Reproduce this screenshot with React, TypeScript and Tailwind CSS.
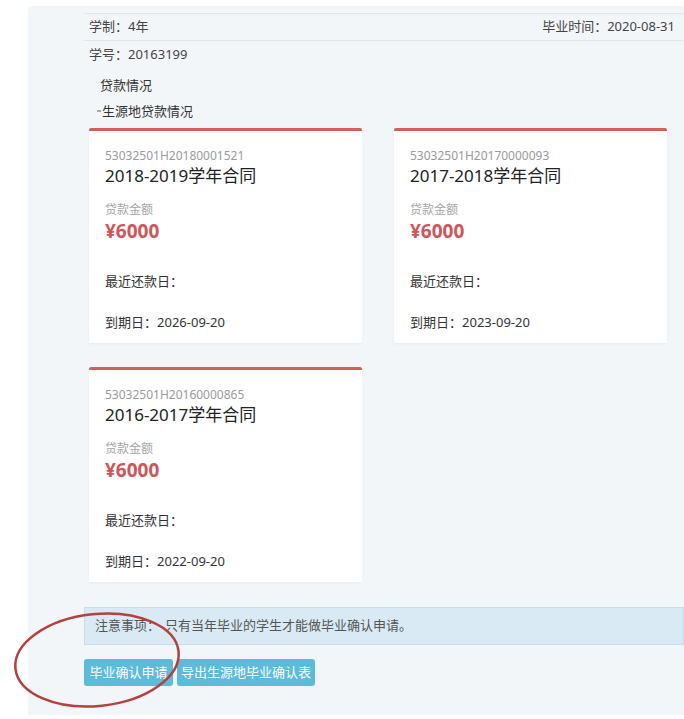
import React from 'react';

interface Contract {
  no: string;
  title: string;
  amount: string;
  due: string;
}

const contracts: Contract[] = [
  { no: '53032501H20180001521', title: '2018-2019学年合同', amount: '¥6000', due: '2026-09-20' },
  { no: '53032501H20170000093', title: '2017-2018学年合同', amount: '¥6000', due: '2023-09-20' },
  { no: '53032501H20160000865', title: '2016-2017学年合同', amount: '¥6000', due: '2022-09-20' },
];

const font = { fontFamily: '"Noto Sans", "Noto Sans CJK SC", sans-serif' };

// 合同卡片
const ContractCard: React.FC<{ c: Contract }> = ({ c }) => (
  <div className="h-[215px] bg-white border-t-[3px] border-[#d4605a] rounded-t-[2px] shadow-[0_1px_3px_rgba(0,0,0,0.04)] pl-4 pt-[17px]">
    <div className="text-[12px] leading-[16px] text-[#9a9a9a]">{c.no}</div>
    <div className="text-[17px] leading-[24px] text-[#222]">{c.title}</div>
    <div className="mt-[14px] text-[12px] leading-[16px] text-[#a5a5a5]">贷款金额</div>
    <div className="text-[19px] leading-[26px] font-bold text-[#d0555a]">{c.amount}</div>
    <div className="mt-[28px] text-[13px] leading-[18px] text-[#333]">最近还款日：</div>
    <div className="mt-[23px] text-[13px] leading-[18px] text-[#333]">到期日：{c.due}</div>
  </div>
);

const App: React.FC = () => {
  return (
    <div className="relative w-[684px] h-[719px] bg-white overflow-hidden" style={font}>
      <div className="ml-[28px] mt-[6px] h-[709px] bg-[#f3f6f9] pl-[56px]">
        {/* 基本信息 */}
        <div className="pt-[7px]">
          <div className="flex justify-between items-center h-[28px] border-t border-b border-[#e1e6ea] pl-[5px] pr-[9px] text-[13px] text-[#444]">
            <span>学制：4年</span>
            <span>毕业时间：2020-08-31</span>
          </div>
          <div className="flex items-center h-[27px] pl-[5px] text-[13px] text-[#444]">学号：20163199</div>
        </div>

        {/* 贷款情况 */}
        <div className="mt-[8px] pl-[16px] text-[13px] leading-[18px] text-[#333]">贷款情况</div>
        <div className="mt-[8px] pl-[13px] flex items-center text-[13px] leading-[18px] text-[#333]">
          <span className="inline-block w-[4px] h-[2px] bg-[#9cb59c] mr-[1px]" />
          生源地贷款情况
        </div>

        <div className="mt-[8px] pl-[5px] pr-[17px] grid grid-cols-2 gap-x-[32px] gap-y-[24px]">
          {contracts.map((c) => (
            <ContractCard key={c.no} c={c} />
          ))}
        </div>

        {/* 注意事项 */}
        <div className="mt-[25px] h-[38px] flex items-center bg-[#d9eaf4] border border-[#c4dfec] pl-[10px] text-[13px] text-[#555]">
          <span>注意事项：</span>
          <span className="ml-[5px]">只有当年毕业的学生才能做毕业确认申请。</span>
        </div>

        <div className="mt-[14px] flex gap-[4px]">
          <button className="h-[27px] w-[89px] rounded-[3px] bg-[#5bbbd9] text-white text-[13px]">毕业确认申请</button>
          <button className="h-[27px] w-[138px] rounded-[3px] bg-[#5bbbd9] text-white text-[13px]">导出生源地毕业确认表</button>
        </div>
      </div>

      {/* 红色圈注 */}
      <svg className="absolute left-0 top-0 pointer-events-none" width="684" height="719">
        <ellipse
          cx="97"
          cy="660"
          rx="82"
          ry="46"
          transform="rotate(-6 97 660)"
          fill="none"
          stroke="#b4413f"
          strokeWidth="2.5"
        />
      </svg>
    </div>
  );
};

export default App;
